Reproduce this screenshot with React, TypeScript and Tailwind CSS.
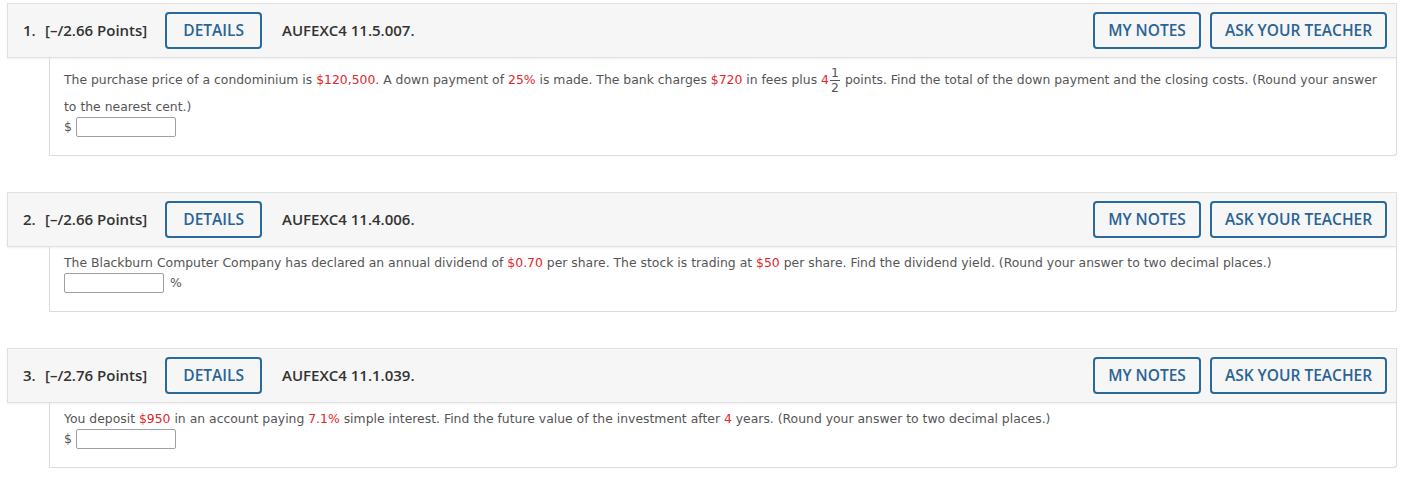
import React from "react";

const red = "text-[#e2262b]";

function Hl({ children }: { children: React.ReactNode }) {
  return <span className={red}>{children}</span>;
}

function Header({ num, points, code }: { num: number; points: string; code: string }) {
  return (
    <div className="flex items-center h-[55px] pl-[15px] pr-[9px] bg-[#f6f6f6] border border-[#e0e0e0] shadow-[0_1px_2px_rgba(0,0,0,0.06)] font-['Open_Sans',sans-serif] font-semibold text-[15px] text-[#333]">
      <span className="w-[22px]">{num}.</span>
      <span>[–/{points} Points]</span>
      <button className="ml-[18px] h-[37px] px-[16px] border-2 border-[#2a6a9a] rounded-[4px] text-[#2a6496] text-[15.5px]">
        DETAILS
      </button>
      <span className="ml-[20px] text-[15px]">{code}</span>
      <div className="ml-auto flex gap-[9px]">
        <button className="h-[37px] w-[108px] border-2 border-[#2a6a9a] rounded-[4px] text-[#2a6496] text-[15.5px]">
          MY NOTES
        </button>
        <button className="h-[37px] w-[177px] border-2 border-[#2a6a9a] rounded-[4px] text-[#2a6496] text-[15.5px]">
          ASK YOUR TEACHER
        </button>
      </div>
    </div>
  );
}

function Box() {
  return <span className="inline-block align-middle w-[100px] h-[20px] border border-[#a0a0a0] rounded-[2px] bg-white"></span>;
}

function Body({ children }: { children: React.ReactNode }) {
  return (
    <div className="ml-[42px] border border-t-0 border-[#dcdcdc] rounded-br-[3px] pl-[14px] pr-[14px] pt-[6px] pb-[18px] font-['DejaVu_Sans',sans-serif] text-[12.4px] text-[#555] leading-[20px]">
      {children}
    </div>
  );
}

export default function App() {
  return (
    <div className="bg-white w-[1404px] h-[485px] px-[7px] pt-[3px]">
      <div>
        <Header num={1} points="2.66" code="AUFEXC4 11.5.007." />
        <Body>
          <p className="leading-[20px]">
            The purchase price of a condominium is <Hl>$120,500</Hl>. A down payment of <Hl>25%</Hl> is made. The bank
            charges <Hl>$720</Hl> in fees plus <Hl>4</Hl>
            <span className="inline-flex flex-col items-center align-middle mt-[2px] mb-[2px] mx-[1px] text-[12.4px]">
              <span className="block h-[14px] leading-[14px]">1</span>
              <span className="block w-[10px] h-0 border-t border-[#555]"></span>
              <span className="block h-[14px] leading-[14px]">2</span>
            </span>{" "}
            points. Find the total of the down payment and the closing costs. (Round your answer to the nearest cent.)
          </p>
          <div className="flex items-center gap-[4px]">
            <span>$</span>
            <Box />
          </div>
        </Body>
      </div>

      <div className="mt-[36px]">
        <Header num={2} points="2.66" code="AUFEXC4 11.4.006." />
        <Body>
          <p>
            The Blackburn Computer Company has declared an annual dividend of <Hl>$0.70</Hl> per share. The stock is
            trading at <Hl>$50</Hl> per share. Find the dividend yield. (Round your answer to two decimal places.)
          </p>
          <div className="flex items-center gap-[6px]">
            <Box />
            <span>%</span>
          </div>
        </Body>
      </div>

      <div className="mt-[36px]">
        <Header num={3} points="2.76" code="AUFEXC4 11.1.039." />
        <Body>
          <p>
            You deposit <Hl>$950</Hl> in an account paying <Hl>7.1%</Hl> simple interest. Find the future value of the
            investment after <Hl>4</Hl> years. (Round your answer to two decimal places.)
          </p>
          <div className="flex items-center gap-[4px]">
            <span>$</span>
            <Box />
          </div>
        </Body>
      </div>
    </div>
  );
}
